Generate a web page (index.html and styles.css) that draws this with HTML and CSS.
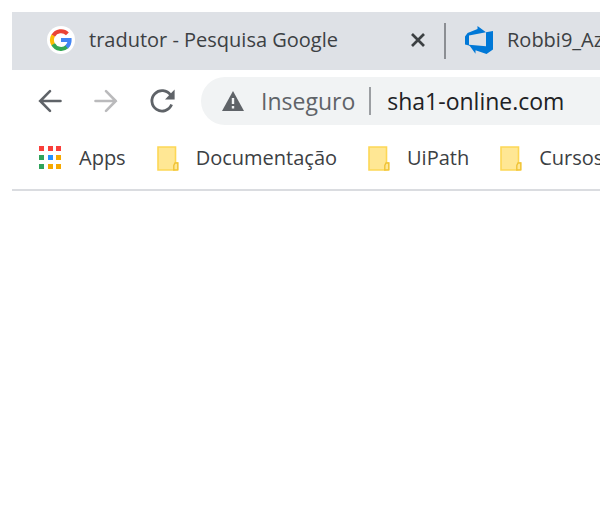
FILE: index.html
```html
<!DOCTYPE html>
<html lang="pt">
<head>
<meta charset="utf-8">
<title>sha1-online.com</title>
<link rel="stylesheet" href="styles.css">
</head>
<body>
<div class="browser">
  <div class="tabs">
    <div class="tab">
      <svg class="favicon" viewBox="0 0 28 28" aria-hidden="true">
        <circle cx="14" cy="14" r="14" fill="#fff"/>
        <g fill="none" stroke-width="4">
          <path d="M20.4 7.8A9 9 0 0 0 6.2 9.8" stroke="#ea4335"/>
          <path d="M6.2 9.5A9 9 0 0 0 6.2 18.5" stroke="#fbbc05"/>
          <path d="M6.2 18.2A9 9 0 0 0 20.2 20.6" stroke="#34a853"/>
          <path d="M14 14H22.6A9 9 0 0 1 19.6 21" stroke="#4285f4"/>
        </g>
      </svg>
      <span class="tab-title">tradutor - Pesquisa Google</span>
      <button class="close" type="button" aria-label="Fechar">
        <svg viewBox="0 0 14 14"><path d="M1 1l12 12M13 1L1 13" stroke="#3c4043" stroke-width="2.7" fill="none"/></svg>
      </button>
    </div>
    <div class="tab tab-next">
      <svg class="favicon" viewBox="0 0 28 28" aria-hidden="true">
        <path fill="#0078d7" fill-rule="evenodd" d="M0 10.5L2.6 7 12.5 3V0L21 6.3 28 5V23.5L21.5 28 10.5 24.3V27.7L5 20.3 4 19.5 0 18.5ZM4 9.5V18.8L21 20.3V6.3Z"/>
      </svg>
      <span class="tab-title">Robbi9_Azure</span>
    </div>
  </div>
  <div class="toolbar">
    <button class="nav" type="button" aria-label="Voltar">
      <svg viewBox="0 0 24 24"><path d="M22.5 12H2.2M12 2.2L2.2 12 12 21.8" fill="none" stroke="#5f6368" stroke-width="2.6" stroke-linecap="round"/></svg>
    </button>
    <button class="nav" type="button" aria-label="Avançar" disabled>
      <svg viewBox="0 0 24 24"><path d="M1.5 12H21.8M12 2.2L21.8 12 12 21.8" fill="none" stroke="#bababc" stroke-width="2.6" stroke-linecap="round"/></svg>
    </button>
    <button class="nav" type="button" aria-label="Recarregar">
      <svg viewBox="0 0 24 24"><path d="M20.6 6.2A10.2 10.2 0 1 0 21.6 15.6" fill="none" stroke="#5f6368" stroke-width="2.8"/><path d="M24.6 .6V10.4H15Z" fill="#5f6368"/></svg>
    </button>
    <div class="omnibox">
      <svg class="warning" viewBox="0 0 22 20" aria-hidden="true"><path d="M11 0L22 20H0Z" fill="#5f6368"/><path d="M11 7V13M11 15V17.4" stroke="#f1f3f4" stroke-width="2.4"/></svg>
      <label class="security" for="address">Inseguro</label>
      <input class="address" id="address" type="text" value="sha1-online.com">
    </div>
  </div>
  <nav class="bookmarks">
    <a class="bookmark" href="#">
      <svg class="mark" viewBox="0 0 24 24" aria-hidden="true">
        <path fill="#f93e3a" d="M1 0h5v5H1zM10 0h5v5h-5zM18 0h5v5h-5z"/>
        <path fill="#2fa35b" d="M1 9h5v5H1zM1 18h5v5H1z"/>
        <path fill="#2490ff" d="M10 9h5v5h-5z"/>
        <path fill="#f6a800" d="M18 9h5v5h-5zM10 18h5v5h-5zM18 18h5v5h-5z"/>
      </svg>
      Apps</a>
    <a class="bookmark" href="#">
      <svg class="mark" viewBox="0 0 24 24" aria-hidden="true"><path d="M2 1H19.5V17H21.5V24H2Z" fill="#ffe794" stroke="#fdd755" stroke-width="1.6"/><path d="M17.8 24V19.4L19 17H21.8V23.6Z" fill="#ffe794" stroke="#f0c337" stroke-width="1.4"/></svg>
      Documentação</a>
    <a class="bookmark" href="#">
      <svg class="mark" viewBox="0 0 24 24" aria-hidden="true"><path d="M2 1H19.5V17H21.5V24H2Z" fill="#ffe794" stroke="#fdd755" stroke-width="1.6"/><path d="M17.8 24V19.4L19 17H21.8V23.6Z" fill="#ffe794" stroke="#f0c337" stroke-width="1.4"/></svg>
      UiPath</a>
    <a class="bookmark" href="#">
      <svg class="mark" viewBox="0 0 24 24" aria-hidden="true"><path d="M2 1H19.5V17H21.5V24H2Z" fill="#ffe794" stroke="#fdd755" stroke-width="1.6"/><path d="M17.8 24V19.4L19 17H21.8V23.6Z" fill="#ffe794" stroke="#f0c337" stroke-width="1.4"/></svg>
      Cursos</a>
  </nav>
</div>
</body>
</html>
```
FILE: styles.css
```css
* { box-sizing: border-box; }
body {
  margin: 0;
  background: #fff;
  color: #3c4043;
  font-family: "Open Sans", "Noto Sans", sans-serif;
  font-size: 20px;
  line-height: 28px;
}
svg { display: block; flex: none; overflow: visible; }
button { padding: 0; border: 0; background: none; flex: none; }
.browser { padding: 12px 0 0 12px; overflow: hidden; }
.tabs { display: flex; height: 58px; background: #dee1e6; overflow: hidden; }
.tab {
  display: flex;
  align-items: center;
  flex: none;
  width: 434px;
  padding: 0 21px 2px 35px;
  white-space: nowrap;
}
.tab-next { position: relative; padding-left: 19px; }
.tab-next::before {
  content: "";
  position: absolute;
  left: -2px;
  top: 11px;
  width: 2px;
  height: 36px;
  background: #8b8e93;
}
.favicon { width: 28px; height: 28px; margin-right: 14px; }
.close { margin-left: auto; }
.close svg { width: 14px; height: 14px; }
.toolbar { display: flex; align-items: center; height: 62px; padding-left: 26px; }
.nav { width: 24px; height: 24px; margin-right: 32px; }
.nav:nth-of-type(3) { margin-right: 27px; }
.nav svg { width: 24px; height: 24px; }
.omnibox {
  display: flex;
  align-items: center;
  flex: 1;
  min-width: 0;
  height: 48px;
  padding-left: 21px;
  border-radius: 24px 0 0 24px;
  background: #f1f3f4;
  font-size: 23px;
}
.warning { width: 22px; height: 20px; margin-right: 17px; }
.security { padding-right: 14px; border-right: 2px solid #9b9ea2; color: #5f6368; }
.address {
  flex: 1;
  min-width: 0;
  padding: 0 0 0 16px;
  border: 0;
  outline: 0;
  background: none;
  color: #202124;
  font: inherit;
}
.bookmarks {
  display: flex;
  align-items: center;
  gap: 30px;
  height: 59px;
  padding: 0 0 6px 26px;
  border-bottom: 2px solid #dadce0;
  overflow: hidden;
}
.bookmark {
  display: flex;
  align-items: center;
  flex: none;
  gap: 16px;
  color: inherit;
  text-decoration: none;
}
.bookmark:first-child { gap: 17px; }
.mark { width: 24px; height: 24px; }
```
